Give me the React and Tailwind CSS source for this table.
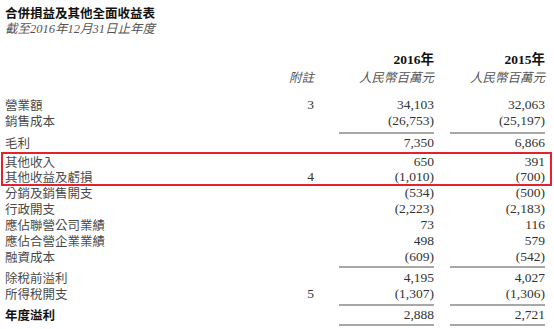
import React from 'react';

const Row = ({ label, note, a, b, bold, boxed }) => (
    <div className={`flex items-center ${boxed ? 'pl-[2px] h-[15px]' : 'pl-[5px] h-[16px]'}`}>
        <div
            className={`w-[275px] text-[12.5px] leading-[16px] font-['Noto_Sans_CJK_TC',sans-serif] ${
                bold ? 'font-bold text-[#111]' : 'text-[#4a4a4a]'
            }`}
        >
            {label}
        </div>
        <div className="w-[34px] text-right text-[13.5px] leading-[16px] text-[#333] font-['Liberation_Serif',serif]">
            {note}
        </div>
        <div className="w-[25px]" />
        <div className="w-[95px] text-right text-[13.5px] leading-[16px] text-[#333] font-['Liberation_Serif',serif]">
            {a}
        </div>
        <div className="w-[16px]" />
        <div className="w-[95px] text-right text-[13.5px] leading-[16px] text-[#333] font-['Liberation_Serif',serif]">
            {b}
        </div>
    </div>
);

const Rule = ({ className }) => (
    <div className={`flex pl-[339px] ${className}`}>
        <div className="w-[95px] h-[2px] bg-[#a8a8a8]" />
        <div className="w-[16px]" />
        <div className="w-[95px] h-[2px] bg-[#a8a8a8]" />
    </div>
);

const App = () => {
    return (
        <div className="w-[554px] h-[329px] bg-white overflow-hidden pt-[5px]">
            {/* title */}
            <div className="pl-[5px] h-[16px] text-[12.5px] leading-[16px] font-bold text-[#111] font-['Noto_Sans_CJK_TC',sans-serif]">
                合併損益及其他全面收益表
            </div>
            <div className="pl-[5px] h-[16px] text-[12.5px] leading-[16px] italic text-[#555] font-['Liberation_Serif','Noto_Sans_CJK_TC',serif]">
                截至2016年12月31日止年度
            </div>

            {/* column headers */}
            <div className="mt-[15px] flex h-[16px] items-center pl-[339px]">
                <div className="w-[95px] text-right text-[13.5px] leading-[16px] font-bold text-[#111] font-['Liberation_Serif','Noto_Sans_CJK_TC',serif]">
                    2016年
                </div>
                <div className="w-[16px]" />
                <div className="w-[95px] text-right text-[13.5px] leading-[16px] font-bold text-[#111] font-['Liberation_Serif','Noto_Sans_CJK_TC',serif]">
                    2015年
                </div>
            </div>
            <div className="flex h-[17px] items-center pl-[280px] text-[12.5px] leading-[17px] italic text-[#555] font-['Noto_Sans_CJK_TC',sans-serif]">
                <div className="w-[34px] text-right">附註</div>
                <div className="w-[25px]" />
                <div className="w-[95px] text-right">人民幣百萬元</div>
                <div className="w-[16px]" />
                <div className="w-[95px] text-right">人民幣百萬元</div>
            </div>

            {/* body */}
            <div className="mt-[12px]">
                <Row label="營業額" note="3" a="34,103" b="32,063" />
                <Row label="銷售成本" a="(26,753)" b="(25,197)" />
            </div>
            <Rule className="mt-[3px]" />
            <div className="mt-[1px]">
                <Row label="毛利" a="7,350" b="6,866" />
            </div>

            {/* highlighted rows */}
            <div className="mt-[1px] ml-[1px] mr-[2px] border-2 border-[#e5212b]">
                <Row boxed label="其他收入" a="650" b="391" />
                <Row boxed label="其他收益及虧損" note="4" a="(1,010)" b="(700)" />
            </div>

            <div className="-mt-[1px]">
                <Row label="分銷及銷售開支" a="(534)" b="(500)" />
                <Row label="行政開支" a="(2,223)" b="(2,183)" />
                <Row label="應佔聯營公司業績" a="73" b="116" />
                <Row label="應佔合營企業業績" a="498" b="579" />
                <Row label="融資成本" a="(609)" b="(542)" />
            </div>
            <Rule className="mt-[1px]" />
            <div className="mt-[2px]">
                <Row label="除稅前溢利" a="4,195" b="4,027" />
                <Row label="所得稅開支" note="5" a="(1,307)" b="(1,306)" />
            </div>
            <Rule className="mt-[2px]" />
            <div className="mt-[1px]">
                <Row bold label="年度溢利" a="2,888" b="2,721" />
            </div>
            <Rule className="mt-[1px]" />
        </div>
    );
};

export default App;
